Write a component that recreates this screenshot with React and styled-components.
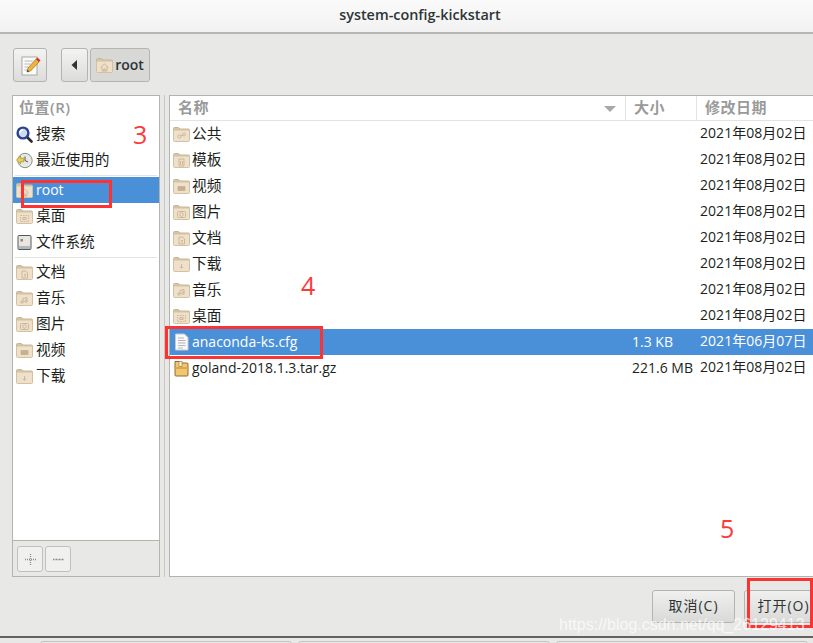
import React from 'react'
import styled, { createGlobalStyle } from 'styled-components'

const GlobalStyle = createGlobalStyle`
html, body {
  margin: 0;
  padding: 0;
  background: #e8e8e7;
}
* {
  box-sizing: border-box;
}
`

const FONT = `"Open Sans", "Noto Sans CJK SC", sans-serif`

const Page = styled.div`
position: relative;
width: 813px;
height: 643px;
overflow: hidden;
display: flex;
flex-direction: column;
background: #e8e8e7;
color: #2e3436;
font-family: ${FONT};
font-size: 14px;
`
const TitleBar = styled.div`
height: 34px;
flex: none;
display: flex;
align-items: center;
justify-content: center;
background: linear-gradient(#fafafa, #f2f2f2);
border-bottom: 2px solid #b6b6b3;
color: #2e3436;
font-family: "Open Sans", sans-serif;
font-weight: 600;
font-size: 14.4px;
padding: 0 0 3px 27px;
`
const Toolbar = styled.div`
height: 61px;
flex: none;
display: flex;
align-items: flex-start;
padding: 14px 0 0 13px;
`
const ToolButton = styled.div`
width: ${p => p.$w}px;
height: 34px;
margin-right: ${p => p.$mr || 0}px;
flex: none;
display: flex;
align-items: center;
justify-content: center;
gap: 2px;
border: 1px solid #b4b4b0;
border-radius: 3px;
background: ${p => p.$active ? '#d8d8d6' : 'linear-gradient(#f3f3f2, #dcdcda)'};
font-weight: ${p => p.$active ? 600 : 400};
font-size: 14px;
`
const Main = styled.div`
height: 482px;
flex: none;
display: flex;
padding-left: 12px;
`
const Sidebar = styled.div`
width: 148px;
flex: none;
display: flex;
flex-direction: column;
background: #fff;
border: 1px solid #b4b4ae;
`
const SidebarHead = styled.div`
height: 25px;
flex: none;
padding-left: 6px;
display: flex;
align-items: center;
color: #9a9a9a;
font-weight: 600;
`
const HeadLabel = styled.span`
font-size: 15px;
letter-spacing: 0.5px;
margin-bottom: 4px;
`
const SidebarList = styled.div`
flex: 1;
display: flex;
flex-direction: column;
`
const Row = styled.div`
height: 26px;
flex: none;
display: flex;
align-items: center;
padding-left: 3px;
gap: 3px;
background: ${p => p.$selected ? '#4a90d9' : 'transparent'};
color: ${p => p.$selected ? '#fff' : '#1c1f20'};
white-space: nowrap;
`
const Label = styled.span`
font-size: ${p => p.$latin ? '14px' : '14.7px'};
margin-bottom: ${p => p.$latin ? '2px' : '4px'};
`
const Separator = styled.div`
height: 1px;
flex: none;
margin: 2px 2px 1px 2px;
background: #e3e3e1;
`
const SidebarFoot = styled.div`
height: 36px;
flex: none;
display: flex;
align-items: flex-start;
gap: 2px;
padding: 5px 0 0 4px;
background: #e8e8e7;
border-top: 1px solid #b4b4ae;
`
const SmallButton = styled.div`
width: 26px;
height: 26px;
display: flex;
align-items: center;
justify-content: center;
border: 1px solid #c0c0bc;
border-radius: 3px;
background: #f0f0ef;
`
const Handle = styled.div`
width: 9px;
flex: none;
display: flex;
justify-content: center;
&::after {
  content: "";
  width: 1px;
  background: #c6c6c2;
}
`
const FileArea = styled.div`
flex: 1;
display: flex;
flex-direction: column;
background: #fff;
border: 1px solid #b4b4ae;
border-right: none;
`
const FileHead = styled.div`
height: 25px;
flex: none;
display: grid;
grid-template-columns: 456px 71px 1fr;
border-bottom: 1px solid #e3e3e1;
color: #9a9a9a;
font-weight: 600;
`
const HeadCell = styled.div`
display: flex;
align-items: center;
justify-content: space-between;
padding: 0 8px 0 8px;
border-right: 1px solid #e3e3e1;
&:last-child {
  border-right: none;
}
`
const SortArrow = styled.span`
width: 0;
height: 0;
margin-right: 1px;
border-left: 6px solid transparent;
border-right: 6px solid transparent;
border-top: 6px solid #a8a8a8;
`
const FileRow = styled.div`
height: 26px;
display: grid;
grid-template-columns: 456px 71px 1fr;
align-items: center;
background: ${p => p.$selected ? '#4a90d9' : 'transparent'};
color: ${p => p.$selected ? '#fff' : '#1c1f20'};
white-space: nowrap;
`
const NameCell = styled.div`
display: flex;
align-items: center;
gap: 2px;
padding-left: 3px;
`
const SizeCell = styled.div`
padding-left: 6px;
margin-bottom: 2px;
`
const DateCell = styled.div`
padding-left: 3px;
letter-spacing: 0.04px;
margin-bottom: 4px;
`
const Footer = styled.div`
height: 61px;
flex: none;
display: flex;
justify-content: flex-end;
gap: 9px;
padding-top: 13px;
margin-right: -10px;
border-bottom: 2px solid #626262;
`
const DialogButton = styled.div`
width: ${p => p.$w}px;
height: 33px;
display: flex;
align-items: center;
justify-content: center;
padding-bottom: 3px;
border: 1px solid #b4b4b0;
border-radius: 3px;
background: linear-gradient(#f0f0ef, #d9d9d7);
letter-spacing: 1px;
`
const TabStrip = styled.div`
flex: 1;
display: flex;
gap: 6px;
padding: 3px 0 0 40px;
`
const Tab = styled.div`
width: 252px;
height: 8px;
flex: none;
border: 1px solid #c4c4c0;
border-radius: 3px 3px 0 0;
`
const Mark = styled.div`
position: absolute;
left: ${p => p.$x}px;
top: ${p => p.$y}px;
width: ${p => p.$w}px;
height: ${p => p.$h}px;
border: 3px solid #fb3333;
`
const Step = styled.div`
position: absolute;
left: ${p => p.$x}px;
top: ${p => p.$y}px;
color: #fb3b3b;
font-family: "Open Sans", sans-serif;
font-size: 25px;
line-height: 30px;
`
const Watermark = styled.div`
position: absolute;
left: 559px;
top: 614px;
color: rgba(255, 255, 255, 0.72);
font-family: "Liberation Sans", sans-serif;
font-size: 16px;
line-height: 22px;
white-space: nowrap;
`

const emblems = {
  share: <><circle cx="6.5" cy="10.5" r="1.6" /><circle cx="11" cy="8.5" r="1.4" /><path d="M8 10l2-1" /></>,
  template: <path d="M6 7h5v7H6zM7.5 9v4M9.5 9v4" />,
  video: <path d="M5 8.5h7v4H5zM7 9h3v3H7z" fill="#c4ae8c" />,
  camera: <><rect x="4.5" y="7.5" width="8" height="6" rx="1" /><circle cx="8.5" cy="10.5" r="1.8" /></>,
  doc: <path d="M6 7h3.5L11.5 9v5H6zM8 10.5h2M8 12h2" />,
  download: <path d="M8.5 8v4M7 10.8l1.5 1.6 1.5-1.6" />,
  music: <><path d="M7 12V8.5l4-1V11" /><circle cx="6" cy="12" r="1.2" /><circle cx="10" cy="11.2" r="1.2" /></>,
  desktop: <><rect x="4.5" y="7.5" width="8" height="6" strokeDasharray="1.5 1" /><rect x="7" y="9.5" width="3" height="2" /></>,
  home: <path d="M4.5 10.5l4-3.5 4 3.5M6 10v4h5v-4M7.8 14v-2h1.4v2" />,
}

const Folder = ({ emblem }) => (
  <svg width="17" height="16" viewBox="0 0 17 16" style={{ flex: 'none' }}>
    <path d="M0.5 2.5a1 1 0 0 1 1-1h4l1.500 1.500h8.500a1 1 0 0 1 1 1v3h-16z" fill="#d6c4a6" stroke="#c9b696" />
    <rect x="0.5" y="4" width="16" height="11.5" rx="1" fill="#eee0ca" stroke="#d3c1a2" />
    <g fill="none" stroke="#c8b392" strokeWidth="0.9">{emblems[emblem]}</g>
  </svg>
)

const SearchIcon = () => (
  <svg width="17" height="17" viewBox="0 0 17 17" style={{ flex: 'none' }}>
    <path d="M10.5 10.5l5 5" stroke="#2a2a2a" strokeWidth="2.600" strokeLinecap="round" />
    <circle cx="7" cy="7" r="5.4" fill="#cfdcf0" stroke="#2a4390" strokeWidth="2.400" />
    <path d="M4 7a3 3 0 0 1 3-3" fill="none" stroke="#fff" strokeWidth="1.400" />
  </svg>
)

const RecentIcon = () => (
  <svg width="17" height="17" viewBox="0 0 17 17" style={{ flex: 'none' }}>
    <circle cx="9" cy="8.5" r="7.2" fill="#e8e8e4" stroke="#8c8c84" />
    <path d="M9 4.500v4l3 1.500" fill="none" stroke="#555" />
    <path d="M0.500 8l4-4v2.200h3.400v3.600H4.500V12z" fill="#e9cf52" stroke="#a98f24" strokeWidth="0.700" />
  </svg>
)

const DriveIcon = () => (
  <svg width="17" height="17" viewBox="0 0 17 17" style={{ flex: 'none' }}>
    <rect x="2" y="1.500" width="13" height="14" rx="1" fill="#e6e6e4" stroke="#55595c" />
    <rect x="3" y="12" width="11" height="3" fill="#b5b7b8" />
    <rect x="4.500" y="5" width="2.500" height="2.500" fill="#c07a50" />
  </svg>
)

const FileIcon = () => (
  <svg width="17" height="18" viewBox="0 0 17 18" style={{ flex: 'none' }}>
    <path d="M2.500 1h9l3.500 3.500V17H2.500z" fill="#fafafa" stroke="#c9c9c9" />
    <path d="M5 5h6M5 7.500h7.500M5 10h7.500M5 12.500h7.500M5 15h5" stroke="#b4b4b4" />
  </svg>
)

const ArchiveIcon = () => (
  <svg width="17" height="17" viewBox="0 0 17 17" style={{ flex: 'none' }}>
    <path d="M2 1.500h4l1 1.500h7a1 1 0 0 1 1 1v11a1 1 0 0 1-1 1H3a1 1 0 0 1-1-1z" fill="#f3c770" stroke="#8d6c2c" />
    <rect x="2.500" y="7" width="12" height="2" fill="#dca84c" />
    <rect x="6" y="1.500" width="3" height="5" fill="#fff4d8" stroke="#8d6c2c" strokeWidth="0.600" />
  </svg>
)

const EditIcon = () => (
  <svg width="21" height="21" viewBox="0 0 21 21">
    <rect x="2" y="2" width="15" height="18" fill="#fbfbfb" stroke="#a8a8a4" />
    <path d="M4.500 6h8M4.500 9h6M4.500 12h4M4.500 15h3" stroke="#b8b8b8" />
    <path d="M7 17l1-4L16 4l3 3-8.500 9z" fill="#efb23a" stroke="#a06e1a" strokeWidth="0.700" />
    <path d="M16 4l1.500-1.500 3 3L19 7z" fill="#d8322c" />
    <path d="M7 17l0.600-2.200 1.600 1.600z" fill="#3a3a3a" />
  </svg>
)

const BackArrow = () => (
  <svg width="7" height="10" viewBox="0 0 7 10">
    <path d="M6 0v10L0.500 5z" fill="#2e3436" />
  </svg>
)

const PlusIcon = () => (
  <svg width="11" height="11" viewBox="0 0 11 11">
    <path d="M0 5.500h11M5.500 0v11" stroke="#8a8a8a" strokeWidth="1.300" strokeDasharray="1 1" />
  </svg>
)

const MinusIcon = () => (
  <svg width="11" height="3" viewBox="0 0 11 3">
    <path d="M0 1.500h11" stroke="#8a8a8a" strokeWidth="1.300" strokeDasharray="1 0.500" />
  </svg>
)

const folders = [
  ['公共', 'share'],
  ['模板', 'template'],
  ['视频', 'video'],
  ['图片', 'camera'],
  ['文档', 'doc'],
  ['下载', 'download'],
  ['音乐', 'music'],
  ['桌面', 'desktop'],
]

const bookmarks = [
  ['文档', 'doc'],
  ['音乐', 'music'],
  ['图片', 'camera'],
  ['视频', 'video'],
  ['下载', 'download'],
]

const App = () => {
  return (
    <Page>
      <GlobalStyle />
      <TitleBar>system-config-kickstart</TitleBar>
      <Toolbar>
        <ToolButton $w={34} $mr={14}><EditIcon /></ToolButton>
        <ToolButton $w={27} $mr={2}><BackArrow /></ToolButton>
        <ToolButton $w={60} $active><Folder emblem="home" /><Label $latin>root</Label></ToolButton>
      </Toolbar>
      <Main>
        <Sidebar>
          <SidebarHead><HeadLabel>位置(R)</HeadLabel></SidebarHead>
          <SidebarList>
            <Row><SearchIcon /><Label>搜索</Label></Row>
            <Row><RecentIcon /><Label>最近使用的</Label></Row>
            <Separator />
            <Row $selected><Folder emblem="home" /><Label $latin>root</Label></Row>
            <Row><Folder emblem="desktop" /><Label>桌面</Label></Row>
            <Row><DriveIcon /><Label>文件系统</Label></Row>
            <Separator />
            {bookmarks.map(([name, emblem]) => (
              <Row key={name}><Folder emblem={emblem} /><Label>{name}</Label></Row>
            ))}
          </SidebarList>
          <SidebarFoot>
            <SmallButton><PlusIcon /></SmallButton>
            <SmallButton><MinusIcon /></SmallButton>
          </SidebarFoot>
        </Sidebar>
        <Handle />
        <FileArea>
          <FileHead>
            <HeadCell><HeadLabel>名称</HeadLabel><SortArrow /></HeadCell>
            <HeadCell><HeadLabel>大小</HeadLabel></HeadCell>
            <HeadCell><HeadLabel>修改日期</HeadLabel></HeadCell>
          </FileHead>
          {folders.map(([name, emblem]) => (
            <FileRow key={name}>
              <NameCell><Folder emblem={emblem} /><Label>{name}</Label></NameCell>
              <SizeCell />
              <DateCell>2021年08月02日</DateCell>
            </FileRow>
          ))}
          <FileRow $selected>
            <NameCell><FileIcon /><Label $latin>anaconda-ks.cfg</Label></NameCell>
            <SizeCell>1.3 KB</SizeCell>
            <DateCell>2021年06月07日</DateCell>
          </FileRow>
          <FileRow>
            <NameCell><ArchiveIcon /><Label $latin>goland-2018.1.3.tar.gz</Label></NameCell>
            <SizeCell>221.6 MB</SizeCell>
            <DateCell>2021年08月02日</DateCell>
          </FileRow>
        </FileArea>
      </Main>
      <Footer>
        <DialogButton $w={83}>取消(C)</DialogButton>
        <DialogButton $w={79}>打开(O)</DialogButton>
      </Footer>
      <TabStrip>
        <Tab />
        <Tab />
        <Tab />
      </TabStrip>

      <Mark $x={21} $y={180} $w={91} $h={28} />
      <Mark $x={165} $y={326} $w={158} $h={33} />
      <Mark $x={747} $y={578} $w={66} $h={50} />
      <Step $x={133} $y={119}>3</Step>
      <Step $x={301} $y={270}>4</Step>
      <Step $x={720} $y={513}>5</Step>
      <Watermark>https://blog.csdn.net/qq_26129413</Watermark>
    </Page>
  )
}

export default App
